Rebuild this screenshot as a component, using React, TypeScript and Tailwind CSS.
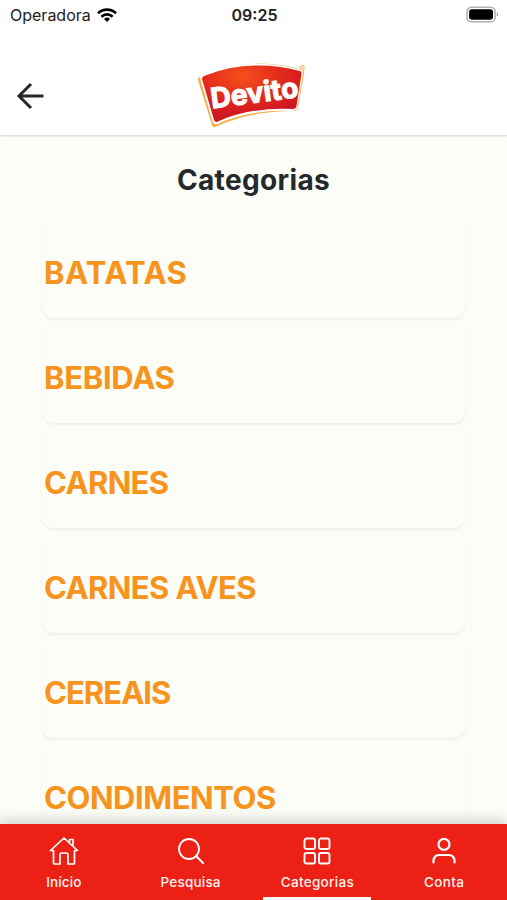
import clsx from "clsx";

const categories = [
  { name: "BATATAS", tracking: "tracking-[0.45px]" },
  { name: "BEBIDAS", tracking: "tracking-[-0.3px]" },
  { name: "CARNES", tracking: "tracking-[-0.65px]" },
  { name: "CARNES AVES", tracking: "tracking-[-0.6px]" },
  { name: "CEREAIS", tracking: "tracking-[-0.95px]" },
  { name: "CONDIMENTOS", tracking: "tracking-[-0.45px]" },
];

function StatusBar() {
  return (
    <div className="flex h-[30px] items-center justify-between pl-2.5 pr-[8px] text-[16px] text-[#222]">
      <div className="flex flex-1 items-center gap-[6px]">
        <span>Operadora</span>
        <svg width="20" height="15" viewBox="0 0 20 15" fill="none" stroke="#000" strokeWidth="2.6">
          <path d="M1 5.200a13 13 0 0 1 18 0" />
          <path d="M4.400 8.700a8 8 0 0 1 11.200 0" />
          <path d="M7 10.900a4.600 4.600 0 0 1 6 0L10 14z" fill="#000" stroke="none" />
        </svg>
      </div>
      <span className="font-semibold">09:25</span>
      <div className="flex flex-1 justify-end">
        <svg className="-mt-[2px]" width="33" height="17" viewBox="0 0 34 17">
          <rect x="1" y="1" width="29" height="15" rx="4.5" fill="#fff" stroke="#b4b4b4" strokeWidth="1.7" />
          <rect x="3.2" y="3.2" width="24.6" height="10.6" rx="2.6" fill="#000" />
          <path d="M31.700 6.200v4.600c2-.8 2-3.800 0-4.600" fill="#aaa" />
        </svg>
      </div>
    </div>
  );
}

function Logo() {
  return (
    <svg width="112" height="68" viewBox="0 0 112 68">
      <defs>
        <radialGradient id="logoRed" cx="0.4" cy="0.2" r="0.7">
          <stop offset="0" stopColor="#f4501c" />
          <stop offset="0.55" stopColor="#e32a1c" />
          <stop offset="1" stopColor="#cf1722" />
        </radialGradient>
      </defs>
      <path
        d="M2 17Q51-7 107 9Q109 10 108 13L102 47Q101 50 97 50Q54 50 19 66Q17 67 16 64L2 19Z"
        fill="#f5b04a"
      />
      <path
        d="M5 15Q52-6 106 9L107 12L101 48L97 50Q54 48 20 63.500L17 62L4 17Z"
        fill="#fff"
      />
      <path
        d="M8 15Q52-3 104 10Q106 11 105.500 13L100.500 45Q100 48 97 48Q54 46 22 60.500Q19 62 18 59L6 18Q6 16 8 15Z"
        fill="url(#logoRed)"
      />
      <text
        x="16"
        y="47.5"
        transform="rotate(-7.5 16 47.5)"
        textLength="88"
        lengthAdjust="spacingAndGlyphs"
        fontFamily="Inter, sans-serif"
        fontSize="28"
        fontWeight="700"
        fill="#fff"
        stroke="#fff"
        strokeWidth="1.1"
      >
        Devito
      </text>
      <circle cx="106" cy="6.5" r="2.500" fill="#f6d7a8" stroke="#f3cf9c" />
    </svg>
  );
}

function Header() {
  return (
    <header className="relative z-10 h-[135px] bg-white shadow-[0_1px_2px_rgba(0,0,0,0.18)]">
      <StatusBar />
      <div className="flex h-[105px] items-start pl-4 pt-[31px]">
        <svg className="mt-[21px]" width="29" height="28" viewBox="0 0 29 28" fill="none" stroke="#24292e" strokeWidth="3">
          <path d="M27.500 14H3M15 2L3 14l12 12" />
        </svg>
        <div className="ml-[151px]">
          <Logo />
        </div>
      </div>
    </header>
  );
}

function HomeIcon() {
  return (
    <svg width="30" height="28" viewBox="0 0 30 28" fill="none" stroke="#fff" strokeWidth="1.7" strokeLinejoin="round">
      <path d="M1.500 13.500L15 1l13.500 12.500h-3V26a1 1 0 0 1-1 1h-5.500V17.500a1.500 1.500 0 0 0-1.500-1.500h-5a1.500 1.500 0 0 0-1.500 1.500V27H5.500a1 1 0 0 1-1-1V13.500z" />
      <path d="M20.500 5.500V2.500h3.500v6.500" />
    </svg>
  );
}

function SearchIcon() {
  return (
    <svg width="28" height="28" viewBox="0 0 28 28" fill="none" stroke="#fff" strokeWidth="1.8">
      <circle cx="12" cy="12" r="10" />
      <path d="M19 19l7 7" strokeLinecap="round" strokeWidth="2" />
    </svg>
  );
}

function GridIcon() {
  return (
    <svg width="28" height="28" viewBox="0 0 28 28" fill="none" stroke="#fff" strokeWidth="1.9">
      <rect x="1.500" y="1.500" width="10.500" height="10.500" rx="2" />
      <rect x="16" y="1.500" width="10.500" height="10.500" rx="2" />
      <rect x="1.500" y="16" width="10.500" height="10.500" rx="2" />
      <rect x="16" y="16" width="10.500" height="10.500" rx="2" />
    </svg>
  );
}

function UserIcon() {
  return (
    <svg width="28" height="28" viewBox="0 0 28 28" fill="none" stroke="#fff" strokeWidth="2.2">
      <circle cx="14" cy="7.300" r="5.500" />
      <path d="M3.500 25.500v-2a5.500 5.500 0 0 1 5.500-5.500h10a5.500 5.500 0 0 1 5.500 5.500v2" strokeLinecap="round" />
    </svg>
  );
}

const tabs = [
  { label: "Início", icon: HomeIcon, tracking: "tracking-[0.1px]" },
  { label: "Pesquisa", icon: SearchIcon, tracking: "tracking-[0.2px]" },
  { label: "Categorias", icon: GridIcon, active: true, tracking: "tracking-[0.3px]" },
  { label: "Conta", icon: UserIcon, tracking: "tracking-[0.3px]" },
];

function TabBar() {
  return (
    <nav className="relative z-10 grid h-[76px] shrink-0 grid-cols-4 bg-[#ec2014] shadow-[0_-2px_14px_rgba(0,0,0,0.22)]">
      {tabs.map(({ label, icon: Icon, active, tracking }) => (
        <div key={label} className="flex flex-col items-center pl-px pt-[13px]">
          <Icon />
          <span className={clsx("mt-[8px] text-[13.5px] font-medium leading-[18px] text-[#fff2ee]", tracking)}>
            {label}
          </span>
          {active && <div className="mt-auto h-[3px] w-[108px] bg-white" />}
        </div>
      ))}
    </nav>
  );
}

export default function App() {
  return (
    <div className="flex h-[900px] w-[507px] flex-col overflow-hidden bg-[#fcfdf7] font-['Inter','Liberation_Sans',sans-serif]">
      <Header />
      <main className="min-h-0 flex-1 overflow-hidden px-[42px] pt-[26px]">
        <h1 className="text-center text-[28px] font-bold leading-[38px] tracking-[0.35px] text-[#24292e]">Categorias</h1>
        <div className="mt-[19px] flex flex-col gap-[5px]">
          {categories.map(({ name, tracking }) => (
            <div
              key={name}
              className="flex h-[100px] items-center rounded-[12px] bg-[#fcfdf7] pl-0.5 pt-[9px] shadow-[0_2px_3px_rgba(0,0,0,0.055)]"
            >
              <span className={clsx("whitespace-nowrap text-[31px] font-bold leading-none text-[#f7941d]", tracking)}>
                {name}
              </span>
            </div>
          ))}
        </div>
      </main>
      <TabBar />
    </div>
  );
}
